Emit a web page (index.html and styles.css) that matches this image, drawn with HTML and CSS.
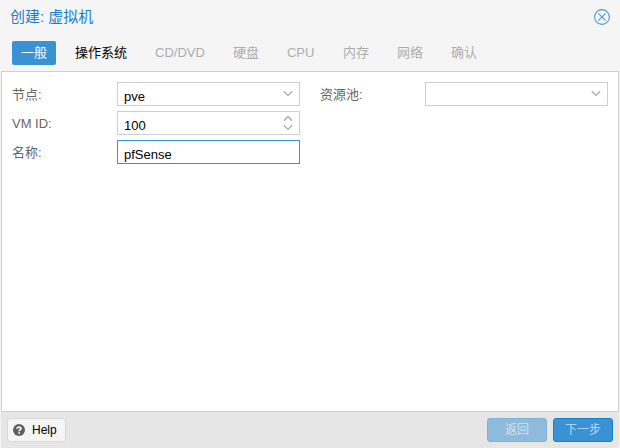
FILE: index.html
```html
<!DOCTYPE html>
<html lang="zh-CN">
<head>
<meta charset="utf-8">
<title>创建: 虚拟机</title>
<link rel="stylesheet" href="styles.css">
</head>
<body>
<div class="window">
  <header class="titlebar">
    <h1 class="title">创建: 虚拟机</h1>
    <svg class="close" width="16" height="16" viewBox="0 0 16 16"><circle cx="8" cy="8" r="7.4"/><path d="M4.3 4.3l7.4 7.4M11.7 4.3l-7.4 7.4"/></svg>
  </header>
  <nav class="tabs">
    <span class="tab active">一般</span>
    <span class="tab enabled">操作系统</span>
    <span class="tab">CD/DVD</span>
    <span class="tab">硬盘</span>
    <span class="tab cpu">CPU</span>
    <span class="tab">内存</span>
    <span class="tab">网络</span>
    <span class="tab">确认</span>
  </nav>
  <main class="panel">
    <div class="column">
      <div class="row"><label class="label">节点:</label><div class="field"><span class="value">pve</span><svg class="trigger" width="10" height="24" viewBox="0 0 10 24"><path d="M.8 9.2L5 13.4l4.2-4.2"/></svg></div></div>
      <div class="row"><label class="label">VM ID:</label><div class="field"><span class="value">100</span><svg class="trigger" width="10" height="24" viewBox="0 0 10 24"><path d="M.8 9.7L5 5.5l4.2 4.2M.8 14.2L5 18.4l4.2-4.2"/></svg></div></div>
      <div class="row"><label class="label">名称:</label><div class="field focus"><span class="value">pfSense</span></div></div>
    </div>
    <div class="column">
      <div class="row"><label class="label">资源池:</label><div class="field"><span class="value"></span><svg class="trigger" width="10" height="24" viewBox="0 0 10 24"><path d="M.8 9.2L5 13.4l4.2-4.2"/></svg></div></div>
    </div>
  </main>
  <footer class="footer">
    <button class="button help"><svg width="12" height="12" viewBox="0 0 12 12"><circle cx="6" cy="6" r="6"/><path d="M4 4.7C4.1 2.7 7.9 2.6 7.9 4.6 7.9 6 6.1 5.8 6.1 7.3M6.1 8.2v1.6"/></svg>Help</button>
    <span class="spacer"></span>
    <button class="button primary disabled">返回</button>
    <button class="button primary">下一步</button>
  </footer>
</div>
</body>
</html>
```

FILE: styles.css
```css
* {
  box-sizing: border-box;
}

body {
  margin: 0;
  background: #f5f5f5;
  font: 400 13px/24px "Liberation Sans", "Noto Sans CJK SC", sans-serif;
}

.window {
  display: flex;
  flex-direction: column;
  width: 620px;
  height: 448px;
  padding: 0 1px;
  background: #f5f5f5;
  overflow: hidden;
}

.titlebar {
  display: flex;
  align-items: center;
  justify-content: space-between;
  height: 34px;
  padding: 0 9px;
}

.title {
  margin: 0;
  color: #157fcc;
  font-size: 15px;
  font-weight: 400;
}

.close {
  fill: none;
  stroke: #4b98d3;
  stroke-width: 1.1;
}

.tabs {
  display: flex;
  gap: 10px;
  height: 37px;
  padding: 7px 11px 0;
}

.tab {
  height: 24px;
  padding: 0 9px;
  border-radius: 2px;
  color: #adadad;
  white-space: nowrap;
}

.tab.cpu {
  width: 46px;
}

.tab.enabled {
  color: #000;
}

.tab.active {
  background: #3892d4;
  color: #fff;
}

.panel {
  display: flex;
  gap: 20px;
  height: 341px;
  padding: 10px;
  border: 1px solid #cfcfcf;
  background: #fff;
}

.column {
  display: flex;
  flex: 1;
  flex-direction: column;
  gap: 5px;
}

.row {
  display: flex;
  height: 24px;
}

.label {
  width: 105px;
  padding-top: 1px;
  color: #666;
}

.field {
  display: flex;
  flex: 1;
  justify-content: space-between;
  height: 24px;
  padding: 0 6px;
  border: 1px solid #cfcfcf;
}

.field.focus {
  border-color: #3892d4;
}

.value {
  padding-top: 2px;
  color: #000;
}

.trigger {
  margin-top: -1px;
  fill: none;
  stroke: #aaa;
  stroke-width: 1.3;
}

.footer {
  display: flex;
  gap: 6px;
  height: 36px;
  padding: 6px;
  border-radius: 0 0 3px 3px;
  background: #e6e6e6;
}

.button {
  height: 24px;
  padding: 0;
  border: 1px solid #d8d8d8;
  border-radius: 3px;
  background: #f5f5f5;
  color: #000;
  font: 400 12px/22px "Liberation Sans", "Noto Sans CJK SC", sans-serif;
}

.help {
  display: flex;
  align-items: center;
  gap: 7px;
  width: 59px;
  padding-left: 5px;
}

.help circle {
  fill: #606060;
}

.help path {
  fill: none;
  stroke: #fff;
  stroke-width: 1.7;
}

.spacer {
  flex: 1;
}

.primary {
  width: 60px;
  border-color: #157fcc;
  background: #3892d4;
  color: #fff;
  font-weight: 300;
}

.disabled {
  opacity: 0.5;
}
```
